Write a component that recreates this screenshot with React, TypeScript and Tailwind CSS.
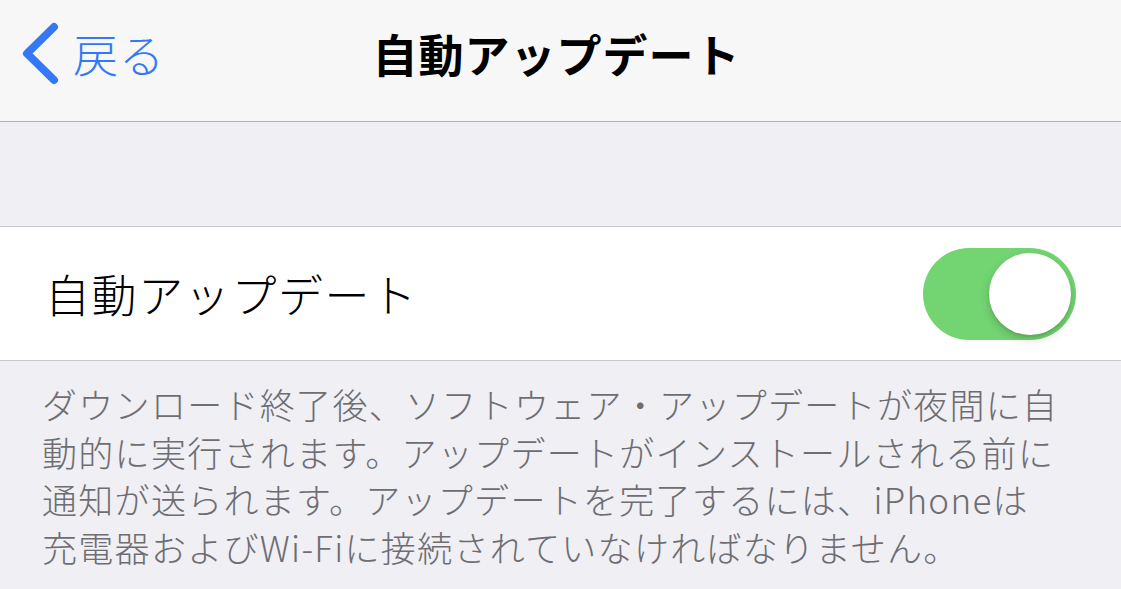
const font = { fontFamily: '"Noto Sans CJK JP", "Noto Sans", sans-serif' }

const footerLines = [
  'ダウンロード終了後、ソフトウェア・アップデートが夜間に自',
  '動的に実行されます。アップデートがインストールされる前に',
  '通知が送られます。アップデートを完了するには、iPhoneは',
  '充電器およびWi-Fiに接続されていなければなりません。',
]

function BackChevron() {
  return (
    <svg width="40" height="64" viewBox="20 24 40 64" className="shrink-0">
      <path
        d="M54 29 L27 55.5 L54 82"
        fill="none"
        stroke="#3478f6"
        strokeWidth="8"
        strokeLinecap="round"
        strokeLinejoin="round"
      />
    </svg>
  )
}

function Toggle() {
  return (
    <div className="w-[153px] h-[92px] rounded-full bg-[#73d472] p-[5px] flex items-center justify-end">
      <div className="w-[82px] h-[82px] rounded-full bg-white shadow-[0_4px_10px_rgba(0,0,0,0.18),0_2px_2px_rgba(0,0,0,0.08)]" />
    </div>
  )
}

export default function App() {
  return (
    <div className="w-[1121px] h-[589px] overflow-hidden bg-[#efeff4]" style={font}>
      <header className="h-[122px] bg-[#f7f7f8] border-b border-[#b2b2b4] grid grid-cols-[1fr_auto_1fr] items-center pb-[14px]">
        <div className="flex items-center pl-[20px] gap-[13px]">
          <BackChevron />
          <span className="text-[45px] leading-none tracking-[1px] text-[#3478f6] font-light">戻る</span>
        </div>
        <h1 className="text-[45px] leading-none font-bold tracking-[1px] text-black pr-[8px]">自動アップデート</h1>
        <div />
      </header>

      <div className="h-[105px] border-b border-[#c8c7cc]" />

      <div className="h-[134px] bg-white border-b border-[#c8c7cc] flex items-center justify-between pl-[45px] pr-[45px]">
        <span className="text-[45px] leading-none tracking-[1.6px] text-black font-light">自動アップデート</span>
        <Toggle />
      </div>

      <div className="pt-[19px] pl-[42px] text-[35px] leading-[47.5px] tracking-[1.3px] text-[#6d6d72] font-light">
        {footerLines.map(line => (
          <div key={line} className="whitespace-nowrap">
            {line}
          </div>
        ))}
      </div>
    </div>
  )
}
